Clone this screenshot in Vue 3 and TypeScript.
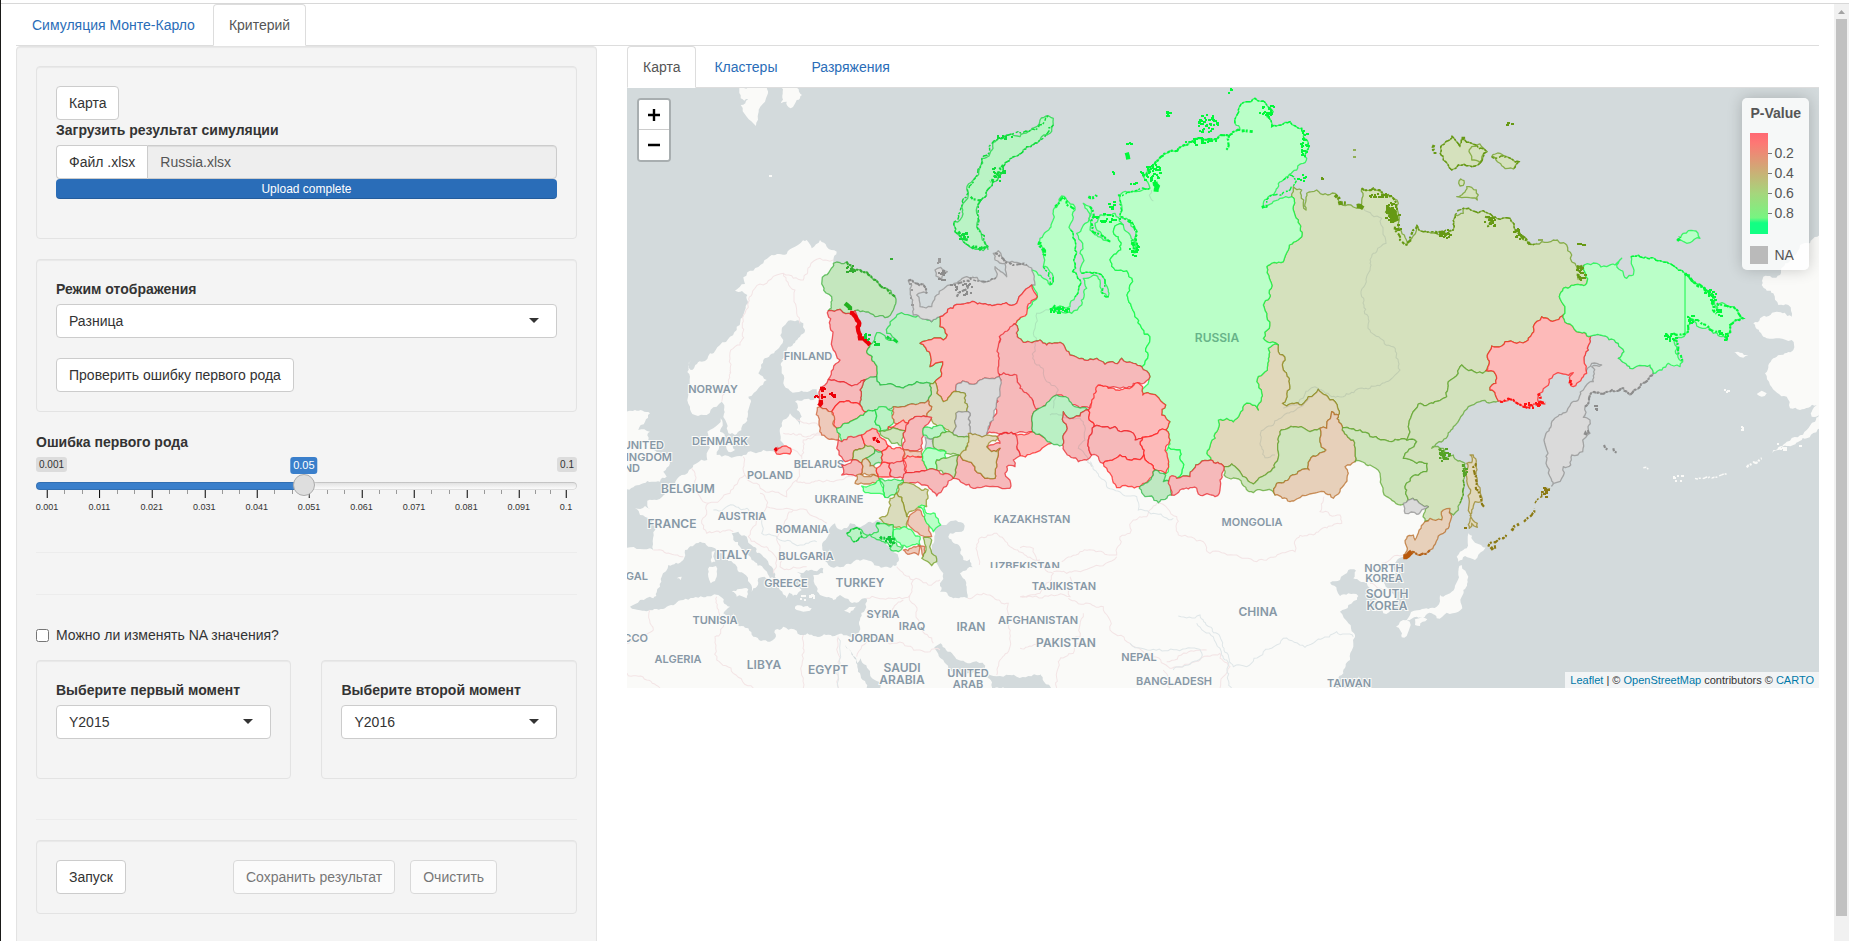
<script setup lang="ts">
import { computed, ref } from 'vue'

const level = ref(0.05)
const allowNa = ref(false)
const mode = ref('Разница')
const first = ref('Y2015')
const second = ref('Y2016')

const LOW = 0.001
const HIGH = 0.1
const share = (v: number) => ((v - LOW) / (HIGH - LOW)) * 100
const levelShare = computed(() => share(level.value))

const majors = [0.001, 0.011, 0.021, 0.031, 0.041, 0.051, 0.061, 0.071, 0.081, 0.091, 0.1]
const minors = majors.slice(0, -1).flatMap((v, i) => {
  const step = (majors[i + 1] - v) / 3
  return [v + step, v + 2 * step]
})

/* Outlines are stored per tile, three units to a pixel. */
type Tile = 'A' | 'B' | 'C' | 'D' | 'E' | 'F'
const origin: Record<Tile, [number, number]> = {
  A: [620, 40], B: [1000, 80], C: [1400, 0], D: [620, 360], E: [1020, 360], F: [1400, 330],
}
type Pt = [number, number]

function parse(source: string): Pt[] {
  let base: Pt = [0, 0]
  const out: Pt[] = []
  for (const token of source.trim().split(/\s+/)) {
    if (token in origin) {
      const o = origin[token as Tile]
      base = [o[0] * 3, o[1] * 3]
    } else {
      const [x, y] = token.split(',').map(Number)
      out.push([base[0] + x, base[1] + y])
    }
  }
  return out
}

function noise(a: number, b: number, c = 0): number {
  const s = Math.sin(a * 12.9898 + b * 78.233 + c * 37.719) * 43758.5453
  return s - Math.floor(s)
}

function split(a: Pt, b: Pt, out: Pt[]): void {
  const len = Math.hypot(b[0] - a[0], b[1] - a[1])
  if (len < 11) {
    out.push(b)
    return
  }
  const flip = a[0] > b[0] || (a[0] === b[0] && a[1] > b[1])
  const [p, q] = flip ? [b, a] : [a, b]
  const k = (noise(p[0] + q[0], p[1] + q[1]) - 0.5) * Math.min(len * 0.45, 13)
  const m: Pt = [
    Math.round((p[0] + q[0]) / 2 - ((q[1] - p[1]) / len) * k),
    Math.round((p[1] + q[1]) / 2 + ((q[0] - p[0]) / len) * k),
  ]
  split(a, m, out)
  split(m, b, out)
}

function line(source: string, close = true): string {
  const pts = parse(source)
  const out: Pt[] = [pts[0]]
  for (let i = 1; i < pts.length; i++) split(pts[i - 1], pts[i], out)
  if (close) split(pts[pts.length - 1], pts[0], out)
  return 'M' + out.map(([x, y]) => `${(x / 3).toFixed(1)} ${(y / 3).toFixed(1)}`).join('L') + (close ? 'Z' : '')
}

const land = [
  'A 212,990 245,965 270,940 300,915 330,890 350,860 370,830 385,790 382,765 345,752 375,732 370,712 400,692 430,670 455,645 500,642 525,620 560,600 575,625 600,600 620,620 650,635 640,660 640,670 650,780 680,860 700,950 900,960 1100,860 1200,850 B 200,780 300,700 450,500 700,400 830,500 1000,450 1200,560 C 50,800 300,850 480,880 520,980 F 540,60 400,40 300,100 230,170 100,260 30,350 60,450 150,520 140,560 130,600 80,650 40,665 10,680 E 1150,590 1115,615 1128,640 1090,665 1110,690 1130,720 1120,745 1090,760 1072,740 1065,710 1050,685 1040,668 1000,655 1008,632 985,630 960,660 930,668 950,690 960,708 985,700 1015,708 985,735 960,755 985,790 1002,820 1000,860 990,900 970,940 940,984 940,1010 D 0,1010 0,720 0,565 21,563 100,570 105,500 90,480 60,465 45,445 75,438 92,448 82,422 110,420 140,400 165,375 185,345 215,325 230,310 262,300 260,280 270,262 258,250 262,215 280,205 302,175 308,190 300,215 315,225 310,240 295,250 290,285 305,290 345,290 370,285 430,270 470,278 490,260 480,220 485,190 510,160 530,180 540,195 545,170 530,150 525,125 580,120 600,110 590,88 545,92 510,92 490,70 485,40 490,0 A 485,960 505,920 540,890 555,870 550,850 500,848 485,870 490,900 470,930 430,960 420,990 D 415,40 440,60 415,85 385,110 385,150 375,190 345,225 325,220 320,190 312,150 305,125 290,140 260,165 225,165 210,140 205,100 215,80 210,50 205,20 215,0',
  'D 15,155 45,150 90,160 75,185 55,210 90,215 85,240 100,262 118,285 125,300 155,288 150,310 130,335 140,350 120,365 70,370 21,388 10,380',
  'A 358,143 362,175 385,178 362,195 380,230 408,258 415,220 435,185 440,143',
  'A 485,143 482,190 500,185 512,205 530,180 546,165 530,143',
  'F 205,610 218,630 235,642 265,650 250,662 225,690 195,678 175,695 170,680 180,665 200,655 203,620',
  'F 185,705 205,740 190,780 185,800 187,835 175,845 140,848 110,865 95,850 50,860 20,870 30,855 60,840 110,830 120,795 130,800 155,785 175,735 176,715',
  'F 45,868 70,862 82,868 60,888 45,885',
  'F 0,875 20,870 32,885 20,918 5,922 0,900 -12,890',
  'C 1275,690 1230,730 1200,735 1150,800 1140,825 1090,830 1085,855 1120,880 1135,915 1165,915 1175,950 1130,935 1080,955 1060,970 1090,1010 F 1100,25 1175,30 1180,60 1140,75 1120,85 1095,130 1110,165 1160,200 1170,235 1200,240 1250,225 1235,260 1280,240',
  'F 1275,285 1220,325 1180,345 1115,370 1120,360 1160,335 1220,300 1245,275 1275,240',
  'F 1070,192 1085,182 1100,190 1085,200', 'F 995,65 1020,68 1045,75 1030,83',
  'D 325,240 340,245 345,270 325,275 318,258',
]

const water = [
  'D 30,740 60,720 100,715 120,680 125,650 145,615 190,600 195,570 240,545 265,560 285,565 315,590 340,610 370,640 390,670 395,695 410,680 415,655 450,655 435,630 395,600 370,580 360,560 340,540 335,520 355,515 380,530 400,560 430,590 455,620 465,650 490,680 510,700 530,705 545,690 520,670 545,655 530,635 570,630 610,625 610,640 580,645 590,680 600,705 640,720 660,705 690,725 740,715 735,750 720,800 710,830 690,830 650,825 600,830 550,825 490,800 465,810 465,835 450,845 400,830 385,805 345,790 330,770 310,760 330,740 310,725 295,705 250,712 190,720 140,740 90,750 45,748',
  'D 645,490 625,515 610,545 610,590 625,615 660,622 700,605 740,600 790,622 830,615 835,590 815,570 790,545 780,510 785,480 740,490 715,500 690,490 665,510',
  'D 940,510 970,495 1000,482 1030,490 1025,515 990,520 985,530 1000,548 1020,560 1030,600 1045,610 1040,630 1020,640 1040,680 1043,715 1000,715 960,695 960,670 970,640 950,610 935,560',
  'D 675,855 700,890 720,940 742,990 785,990 750,940 722,895 712,910 695,885',
  'D 943,862 962,850 1000,885 1050,910 1088,908 1110,945 1190,950 1260,945 E 60,942 72,965 95,990 D 1115,990 1112,960 1090,922 1070,935 1040,940 1010,950 985,925 970,900',
  'D 1030,602 1050,598 1058,622 1040,628',
]

const isles = [
  'D 268,620 288,618 290,650 272,670 265,650', 'D 275,575 285,572 286,605 275,608',
  'D 335,695 385,688 380,715 350,710', 'D 525,740 575,745 570,752 530,750', 'D 672,752 708,740 690,760',
  'D 445,655 490,655 520,690 500,715 480,690', 'D 170,655 185,650 182,660',
]

const borders = [
  'A 640,660 600,655 570,680 550,720 520,715 490,700 470,705 405,745 375,820 360,915 332,930 330,1000',
  'A 490,700 525,750 530,820 540,850', 'D 305,125 325,60 330,30',
  'D 530,180 590,190 610,225 520,220 490,220', 'D 605,225 550,240 545,290 512,270',
  'D 545,290 530,365 620,360 700,350', 'D 370,290 375,345 430,390 500,410 530,360',
  'D 215,325 225,370 240,410 265,430 245,490 260,520 340,515', 'D 265,430 330,400 375,345',
  'D 420,400 440,440 520,450 560,450 620,490', 'D 440,440 400,500 385,530 440,560 470,600 460,640',
  'D 520,450 470,540 480,620 560,620', 'D 100,570 190,590', 'D 290,710 310,800 285,830 290,900 340,940 400,984',
  'D 550,825 550,984', 'D 655,830 655,984', 'D 90,750 100,810 21,850', 'D 21,940 120,984',
  'D 740,715 870,705 880,660 830,620', 'D 870,705 900,800 940,850', 'D 740,750 780,770 850,720',
  'D 710,890 750,830 830,850 900,870 960,870', 'D 880,660 940,670 960,660', 'D 1043,715 1090,700 1165,730 1170,860 1140,900 1130,945',
  'D 1078,615 1078,535 1130,520 1170,560 1260,600', 'E 0,563 40,565 50,600 100,640 60,700 0,710',
  'E 125,605 180,575 290,585 300,530 330,520 340,480 380,470 410,430 470,470 475,525 550,545 570,580 640,585 710,605 825,575 830,535 880,525 965,490 960,465 900,455 912,410',
  'E 290,590 220,620 140,640 100,635', 'E 150,650 150,710 0,710', 'E 145,715 250,740 270,810 330,850 400,890 450,925 540,900 600,880 630,920 600,984',
  'E 190,760 180,830 0,865', 'E 110,984 115,905 160,880 190,830', 'E 1050,670 1100,690', 'E 1085,610 1150,585',
  'E 430,930 450,984', 'E 560,870 500,880 440,905',
]
const rivers = [
  'E 210,305 260,380 350,410 355,450 460,475', 'E 475,768 540,765 600,830 640,920 680,920 730,875 790,835 855,862 950,815 1000,830',
  'E 530,790 580,830 620,900 635,984', 'D 280,450 340,435 420,460 425,520 480,540 540,555 590,545',
  'E 330,850 400,868 540,868 545,890 460,930', 'D 655,835 655,984',
]
const innerRivers = [
  'B 460,363 448,345 455,330', 'B 148,690 110,700 100,760 105,790 98,835 130,880 175,930 160,985',
  'B 1090,385 1145,415 1158,490 1130,515 1100,590 1085,650 1110,750 1190,820 1200,870 1170,900 1080,925 995,950 945,920 890,975 850,985',
  'E 870,110 820,155 735,205 720,250 735,293 765,285', 'E 90,165 190,185 195,240 175,265 215,320',
]

const G = ['#baffc8', '#00f83a']
const G2 = ['#baf3c5', '#0cd636']
const G3 = ['#bfe8c2', '#22b53c']
const M = ['#c4e7be', '#32ac30']
const L = ['#cfe5bd', '#56a326']
const Y = ['#d5e1bd', '#669914']
const O = ['#dadcbc', '#858c14']
const T = ['#e1d8bb', '#94801a']
const B = ['#e7d0ba', '#b5651d']
const S = ['#eecabb', '#cb5628']
const R = ['#fdbab9', '#ff1414']
const R2 = ['#f6b9ba', '#ea1c24']
const N = ['#dadada', '#8c8c8c']

const regions: [string[], string][] = [
  [G2, 'A 1285,227 1300,235 1300,255 1290,280 1260,300 1220,320 1180,350 1150,385 1120,425 1100,465 1080,485 1070,520 1070,560 1085,590 1105,620 1090,632 1060,625 1030,605 1005,575 1003,545 1020,540 1025,500 1045,465 1040,448 1060,420 1080,380 1085,355 1110,340 1130,300 1165,285 1200,290 1225,275 1250,260 1260,240'],
  [Y, 'B 875,350 880,320 905,330 918,390 920,340 950,330 1005,340 1020,370 1085,385 1085,325 1120,325 1165,345 1195,370 1195,440 1222,495 C 50,675 70,695 130,700 160,690 165,645 190,640 190,625 250,632 290,655 330,655 345,690 390,733 460,720 500,735 515,765 515,785 530,800 553,795 560,850 540,855 490,865 478,890 495,920 490,945 470,960 425,950 400,980 385,1015 F 385,30 350,40 315,35 305,48 275,48 262,75 268,100 248,130 215,120 185,105 175,130 145,155 140,200 100,220 55,222 35,255 25,290 20,330 E 1115,245 1050,230 1020,210 968,203 955,165 945,125 930,120 895,88 865,110 845,135 800,138 787,130 808,70 790,30 B 855,840 835,815 835,795 790,775 808,745 800,710 790,675 808,655 808,595 800,560 850,545 865,510 905,470 895,420 880,390'],
  [T, 'B 835,795 835,815 855,840 E 790,30 808,70 787,130 800,138 845,135 865,110 895,88 930,120 945,125 955,165 935,155 925,180 920,205 900,205 860,210 825,200 780,215 775,275 765,310 700,372 635,312 612,320 572,300 560,280 572,250 585,235 595,180 620,175 640,185 672,135 690,130 715,150 725,100 710,65 743,15 B 805,805'],
  [L, 'E 780,215 825,200 860,210 900,205 900,245 918,270 870,300 868,330 770,370 765,405 740,390 700,398 665,370 612,345 612,320 635,312 700,372 765,310 775,275'],
  [B, 'E 935,155 955,165 968,203 1000,240 1005,305 975,320 985,340 960,395 940,415 890,398 810,425 765,405 770,370 868,330 870,300 918,270 900,245 900,205 920,205 925,180'],
  [L, 'E 968,203 1020,210 1050,230 1115,245 1160,240 1190,245 1150,295 1190,310 1222,310 1220,335 1185,345 1155,380 1165,420 1150,433 1100,410 1080,340 1050,315 1005,305 1000,240'],
  [['#d2e2bc', '#56a326'], 'F 248,130 258,122 285,130 288,160 270,180 295,213 240,215 205,230 160,290 95,355 130,355 125,385 160,375 195,400 190,450 180,520 160,555 140,540 125,570 75,575 75,545 85,530 50,510 25,510 15,470 45,435 80,425 82,400 50,400 10,385 50,335 20,330 25,290 35,255 55,222 100,220 140,200 145,155 175,130 185,105 215,120'],
  [N, 'F 25,510 50,510 85,530 50,553 15,550 10,520'],
  [B, 'F 75,575 90,565 125,570 130,540 150,535 155,560 130,610 90,660 60,675 35,665 12,682 22,655 20,625 40,615 45,630'],
  [T, 'F 200,400 215,398 210,375 220,375 228,400 232,450 245,515 225,515 215,540 218,570 232,580 232,592 215,580 208,595 210,550 212,480'],
  [N, 'F 572,18 600,15 655,40 672,65 655,85 690,115 750,105 760,130 720,170 690,195 670,175 625,185 570,195 555,230 550,262 570,270 570,310 548,330 548,365 515,375 512,405 490,410 485,445 455,468 440,390 438,310 460,270 500,245 550,180 580,155 575,110 605,105 575,100 555,130 552,90 565,60'],
  [R, 'C 385,1015 400,980 425,950 470,960 490,945 500,970 530,995 F 572,18 565,60 552,90 560,130 520,170 510,150 520,128 460,135 420,190 415,215 435,222 370,230 340,210 295,213 270,180 288,160 285,130 258,122 268,100 262,75 275,48 305,48 315,35 350,40 385,30'],
  [G, 'C 553,795 590,790 620,800 645,795 665,775 650,795 680,835 700,825 693,770 780,782 855,820 940,890 950,930 960,910 1000,920 1028,955 990,975 980,1015 940,1000 925,980 890,978 870,955 858,1000 825,1015 F 830,50 848,95 840,110 805,100 760,130 750,105 690,115 655,85 672,65 655,40 600,15 572,18 C 530,995 500,970 490,945 495,920 478,890 490,865 540,855 560,850'],
  [G, 'B 90,572 130,595 150,615 160,590 130,560 130,520 118,490 130,465 155,430 160,390 175,370 185,348 205,365 225,390 212,450 225,480 218,575 240,600 225,650 210,680 150,688 215,700 245,675 260,625 250,595 280,585 300,600 305,640 325,650 315,610 295,580 245,580 240,520 248,490 230,460 265,425 265,395 250,370 270,380 270,450 310,480 330,485 300,455 285,430 300,405 345,400 370,435 350,435 340,455 355,470 362,510 332,545 345,570 380,572 398,605 385,660 405,710 425,745 450,770 440,800 445,825 425,860 400,850 365,835 345,850 315,853 290,835 210,825 185,790 140,795 120,780 70,787 52,770 55,750 42,732 85,685 112,650 105,630 100,600 88,585'],
  [G, 'B 355,345 365,340 450,325 430,290 460,255 500,220 560,195 600,175 640,180 680,165 720,150 705,130 715,90 740,65 765,55 800,75 820,95 800,110 815,140 870,125 905,145 925,190 920,235 890,270 850,300 790,370 790,382 840,355 875,350 880,390 895,420 905,470 865,510 850,545 800,560 808,595 808,655 790,675 800,710 808,745 790,775 835,795 805,805 E 743,15 710,65 725,100 715,150 690,130 672,135 640,185 620,175 595,180 585,235 572,250 560,280 572,300 540,310 510,350 470,355 490,320 480,270 445,262 450,240 437,210 450,185 425,165 437,135 410,108 368,105 390,50 B 425,860 445,825 440,800 450,770 425,745 405,710 385,660 398,605 380,572 345,570 332,545 362,510 355,470 340,455 350,435 370,435 400,480 408,515 410,450 385,420 360,410 365,375'],
  [G, 'E 445,262 480,270 490,320 470,355 430,365 425,350 445,335 437,290'],
  [Y, 'C 155,408 180,440 190,415 215,430 260,455 240,490 175,495 155,510 130,480 122,440'],
  [Y, 'C 215,440 240,432 262,455 240,490 215,480'],
  [Y, 'C 275,470 300,460 320,470 357,485 340,507 310,500'],
  [Y, 'C 170,590 190,580 200,560 215,562 235,585 232,600'],
  [Y, 'C 176,550 182,537 192,542 190,556 180,558'],
  [G, 'C 832,722 850,700 865,692 880,692 900,715 870,728'],
  [M, 'A 640,670 680,665 700,690 740,695 800,745 828,785 820,810 795,833 765,830 705,812 685,820 660,808 625,812 635,770 610,740 615,705'],
  [R2, 'A 625,812 660,808 685,820 705,812 718,850 720,895 750,915 740,935 765,970 770,1010 730,1020 695,1038 625,1018 660,960 640,930 630,860'],
  [G2, 'A 740,935 750,915 770,878 830,905 800,880 805,860 845,818 880,830 935,845 960,830 960,860 982,885 970,900 900,910 930,940 930,980 968,965 965,1000 945,1025 930,1030 890,1025 860,1038 780,1035 770,1010 765,970'],
  [N, 'A 1120,640 1135,632 1160,665 1220,675 1240,700 1245,735 1235,735 1180,795 1010,793 960,830 935,845 880,825 875,735 865,722 910,732 920,760 890,765 900,800 935,800 945,770 990,735 1040,710 1100,725 1130,710 1125,680 1160,710 1155,670 1125,660'],
  [N, 'A 945,690 962,682 982,695 965,718 948,708'],
  [R, 'A 960,830 1010,793 1180,795 1235,735 1252,770 1182,852 1140,890 1138,1010 1080,1020 1070,1030 1015,1030 1010,1055 970,1085 950,1060 945,1025 965,1000 968,965 930,980 930,940 900,910 970,900 982,885 960,860'],
  [R2, 'B 42,732 55,750 52,770 70,787 120,780 140,795 185,790 210,825 290,835 315,853 345,850 365,835 400,850 425,860 450,890 425,912 400,910 380,925 300,915 290,950 268,985 240,985 175,945 125,985 105,990 90,955 50,925 50,895 0,885 -2,770'],
  [R2, 'E -62,45 -10,45 0,85 35,115 50,150 35,180 38,215 0,215 -20,222 -100,222 -70,150 -75,100'],
  [R, 'D 1140,222 1185,222 1238,215 1295,250 1260,272 1200,287 1190,260'],
  [['#baf0c4', '#22b53c'], 'E 50,150 110,105 145,115 165,140 205,150 180,168 140,170 130,155 130,185 142,205 128,255 95,250 75,235 38,215 35,180'],
  [R2, 'E 130,155 140,170 180,168 205,150 208,180 222,200 205,240 215,285 200,300 175,305 135,275 128,255 142,205 130,185'],
  [R, 'E 235,75 320,85 345,70 368,80 368,105 410,108 437,135 425,165 450,185 437,210 368,232 345,240 340,220 305,215 285,200 222,200 208,180 205,150'],
  [R2, 'E 222,200 285,200 305,215 340,220 345,240 368,232 372,285 330,300 300,285 250,310 228,285 215,285 205,240'],
  [R, 'E 368,232 437,210 450,240 437,260 445,300 437,340 405,330 372,285'],
  [R, 'E 250,310 300,285 330,300 372,285 405,330 400,345 360,380 325,380 290,383 270,340'],
  [G3, 'E 405,330 437,345 430,365 450,365 455,405 415,428 395,408 375,410 358,385 400,345'],
  [R2, 'E 450,350 470,355 510,350 540,310 572,300 612,320 600,360 598,400 585,410 535,402 530,385 480,390 455,405 445,370'],
  [R2, 'D 1130,230 1140,222 1185,222 1190,260 1200,287 1180,300 1185,320 1160,320 1155,340 1172,370 1170,385 1110,380 1060,385 1000,355 1015,285 1020,285 1065,330 1095,355 1125,355 1130,300 1140,265 1115,275 1100,260 1140,250'],
  [N, 'D 1015,70 1070,70 1080,60 1138,50 1130,125 1120,180 1105,200 1100,225 1045,220 1050,200 1045,155 1040,155 1035,100 1010,95'],
  [O, 'D 930,70 945,65 950,100 970,125 1010,95 1035,100 1040,155 1008,160 998,220 940,190 920,170 935,140 925,120'],
  [N, 'D 1008,160 1045,155 1050,200 1045,230 998,220'],
  [G3, 'D 735,60 770,50 780,75 860,78 890,65 930,70 925,120 820,140 790,145 765,150 740,155 720,135 720,90'],
  [R2, 'D 625,58 695,78 735,60 720,90 720,135 665,125 635,155 600,140 600,90'],
  [R, 'D 635,155 665,125 720,135 740,155 690,185 650,205'],
  [S, 'D 592,143 600,140 635,155 640,185 650,205 655,240 605,225'],
  [G2, 'D 740,155 765,150 765,185 780,215 745,218 720,240 665,245 650,205 690,185'],
  [G2, 'D 765,150 790,140 820,150 822,185 800,210 780,215 765,185'],
  [S, 'D 820,140 925,120 935,140 920,170 885,170 865,190 822,185'],
  [R, 'D 805,200 850,180 865,190 860,215 805,210'],
  [L, 'D 780,215 805,210 860,215 850,220 845,258 815,250 790,230'],
  [R2, 'D 865,190 885,170 935,172 910,205 905,265 850,268 850,220'],
  [G2, 'D 910,205 960,195 980,215 940,235 910,225'],
  [N, 'D 915,230 940,235 940,270 915,265'],
  [L, 'D 940,235 980,215 998,220 1045,230 1035,285 978,280 945,265'],
  [T, 'D 1045,220 1100,225 1135,235 1100,260 1115,275 1140,265 1130,300 1125,355 1095,355 1065,330 1020,285 1038,270'],
  [R2, 'D 655,240 665,245 725,225 735,255 700,280 697,300 670,300 650,265'],
  [R, 'D 725,225 770,208 785,235 805,258 785,275 735,255'],
  [Y, 'D 700,280 735,255 765,270 737,295 725,310 697,300'],
  [G3, 'D 765,270 785,275 785,310 750,318 737,295'],
  [R, 'D 785,275 805,258 850,268 850,302 785,310'],
  [R2, 'D 665,315 697,300 725,310 720,345 665,345'],
  [B, 'D 725,310 737,295 750,318 770,325 775,350 720,345'],
  [B, 'D 710,345 775,350 778,360 740,372 705,370'],
  [R, 'D 785,310 810,310 815,350 775,350 770,325'],
  [R2, 'D 810,310 850,302 858,338 850,355 815,350'],
  [S, 'D 850,268 908,268 910,290 850,298'],
  [R, 'D 850,298 908,290 922,330 858,338'],
  [G, 'D 915,270 978,275 978,295 950,300 950,330 922,330 908,290'],
  [L, 'D 950,300 978,295 1015,285 1000,355 985,355 950,330'],
  [R2, 'D 858,338 922,330 950,330 1000,355 955,400 950,408 935,390 905,375 850,368'],
  [G2, 'D 778,355 850,360 850,368 825,405 795,412 790,385'],
  [G, 'D 725,378 778,360 790,385 795,412 760,400 730,392'],
  [O, 'D 835,375 850,368 925,390 920,440 885,450 860,470 850,430 830,400'],
  [O, 'D 810,415 830,400 850,430 860,470 870,470 860,500 800,492 778,475 805,455'],
  [S, 'D 870,465 900,450 930,490 935,530 900,525 870,500'],
  [G, 'D 895,440 915,438 920,460 945,460 962,495 940,515 920,490 915,465'],
  [G2, 'D 770,490 820,495 825,540 820,565 780,540 750,525 775,515'],
  [G, 'D 820,510 860,503 900,530 900,555 860,562 830,545'],
  [G2, 'D 820,545 850,560 835,575 810,565'],
  [S, 'D 850,570 900,558 895,585 870,582'],
  [S, 'D 895,555 915,560 910,590'],
  [Y, 'D 910,533 935,540 935,580 950,605 935,617 905,595 918,570'],
  [G2, 'D 680,520 710,503 730,520 750,523 725,530 700,545'],
  [R, 'D 465,272 485,260 512,265 510,282 470,282'],
]

const shapes = regions.map(([c, s]) => ({ d: line(s), fill: c[0], stroke: c[1] }))

/* Broken shorelines: thick dashes laid over the outline; the widest run solid. */
const shores: [string, number, string][] = [
  ['#10dc3c', 2, 'A 1300,255 1260,300 1220,320 1180,350 1150,385 1120,425 1100,465 1080,485 1070,560 1105,620 1060,625 1030,605 1005,575 1003,545 1025,500 1060,420 1085,355 1130,300 1165,285 1225,275 1285,227'],
  ['#10dc3c', 4, 'A 1150,375 1130,405 1110,425'], ['#10dc3c', 4, 'A 1015,575 1045,600'],
  ['#10dc3c', 4, 'A 1055,625 1105,625'], ['#10dc3c', 3, 'A 1052,470 1085,480'],
  ['#00f83a', 3, 'B 430,290 460,255 500,220 560,195 600,175 640,180 680,165 720,150'],
  ['#00f83a', 2, 'B 705,130 715,90 740,65 765,55 800,75 820,95 800,110 815,140 870,125 905,145 925,190 920,235'],
  ['#00f83a', 4, 'B 725,153 758,155'], ['#00f83a', 3, 'B 688,165 685,190 678,210'],
  ['#00f83a', 7, 'B 465,305 468,335'], ['#00f83a', 4, 'B 785,382 805,378'],
  ['#00f83a', 2, 'B 850,300 870,285 890,300 870,330 845,345 820,345 800,368'],
  ['#00f83a', 5, 'B 120,485 130,530'], ['#00f83a', 2, 'B 130,560 145,575 150,615 160,590'],
  ['#00f83a', 5, 'B 150,690 180,685 210,692'], ['#00f83a', 3, 'B 165,380 190,352 205,378 225,390'],
  ['#00f83a', 2, 'B 212,450 225,480 218,575 240,600 225,650'], ['#00f83a', 4, 'B 265,350 290,345'],
  ['#00f83a', 4, 'B 405,520 395,480'], ['#00f83a', 3, 'B 385,420 405,450 400,500'],
  ['#00f83a', 3, 'B 270,380 275,450 330,485'], ['#00f83a', 6, 'B 380,218 385,238'],
  ['#00f83a', 2, 'B 245,580 295,580 315,610 310,645 328,650'],
  ['#00f83a', 2, 'B 355,345 400,335 450,325'], ['#00f83a', 2, 'B 360,360 362,410 400,440'],
  ['#669914', 3, 'B 1085,325 1120,325 1165,345 1190,370'], ['#669914', 5, 'B 1005,345 1020,370 1040,370'],
  ['#669914', 10, 'B 1160,388 1180,398 1188,425'], ['#669914', 3, 'B 1185,440 1200,470 1222,495 1250,440'],
  ['#669914', 6, 'B 1070,378 1090,385'], ['#669914', 4, 'C 105,695 130,700 145,705'],
  ['#669914', 2, 'C 50,675 70,695 160,690 165,645 190,625 250,632 290,655 330,655 345,690 390,733 410,730'],
  ['#669914', 3, 'C 255,650 275,665 265,685'], ['#669914', 4, 'C 345,690 365,710 390,733'],
  ['#669914', 5, 'C 530,800 550,798'], ['#669914', 4, 'C 545,800 535,840'],
  ['#669914', 2, 'C 155,408 180,440 190,415 215,430 260,455 240,490 175,495 155,510 130,480 122,440 155,408'],
  ['#669914', 2, 'C 275,470 320,470 357,485 340,507'], ['#669914', 5, 'C 190,410 195,420'], ['#669914', 4, 'C 102,435 105,462'],
  ['#00f83a', 2, 'C 693,770 780,782 855,820 940,890'], ['#00f83a', 4, 'C 855,820 900,860 940,890 950,940'],
  ['#00f83a', 3, 'C 950,910 1000,920 1028,955 990,975 980,1015 925,980 870,955 858,1000 800,1005'],
  ['#00f83a', 3, 'F 825,30 835,70 848,95'], ['#00f83a', 4, 'C 832,722 840,710'],
  ['#32ac30', 3, 'A 680,665 700,690 740,695 800,745 825,770'], ['#22b020', 6, 'A 675,790 690,810'],
  ['#eb0008', 6, 'A 690,818 718,850 720,895 750,915'], ['#0cd636', 4, 'A 800,890 835,910'],
  ['#eb0008', 5, 'D 600,85 612,85'], ['#eb0008', 6, 'D 602,120 597,138'],
  ['#8c8c8c', 3, 'A 865,722 910,732 920,760'], ['#8c8c8c', 3, 'A 990,735 1060,710'], ['#8c8c8c', 3, 'A 1010,770 1045,740'],
  ['#8c8c8c', 2, 'A 1060,720 1100,725 1130,710'], ['#8c8c8c', 3, 'A 1125,640 1155,665 1220,675'],
  ['#ff1414', 4, 'F 415,190 420,215 435,220'], ['#ff1414', 3, 'F 300,215 340,210 370,230 400,228'],
  ['#ff1414', 4, 'F 512,150 515,165'], ['#8c8c8c', 3, 'F 555,230 570,195 625,185 670,175 690,195 720,170 760,130'],
  ['#8c8c8c', 5, 'F 555,315 568,305'], ['#8c8c8c', 3, 'F 612,345 625,360'], ['#8c8c8c', 3, 'F 640,355 650,368'],
  ['#8c7a14', 3, 'F 228,400 228,450 245,515 252,530'], ['#8c7a14', 3, 'F 265,650 320,610'],
  ['#8c7a14', 5, 'F 272,658 290,650'], ['#8c7a14', 4, 'F 335,602 357,582'], ['#8c7a14', 3, 'F 372,575 395,555 402,535'],
  ['#8c7a14', 2, 'F 405,520 425,500 440,475 450,478'], ['#b8590c', 7, 'E 1150,590 1175,575'],
  ['#b5651d', 3, 'F 35,665 60,675 90,660'], ['#56a326', 4, 'F 118,355 135,385'], ['#56a326', 4, 'F 190,402 195,440'],
  ['#56a326', 2, 'F 190,450 180,520'], ['#10c83a', 4, 'D 780,530 805,535 815,550'], ['#10c83a', 2, 'D 680,520 710,503 725,530 700,545'],
  ['#10c83a', 3, 'D 770,490 780,490'], ['#eb0008', 5, 'D 465,272 475,265'], ['#eb0008', 5, 'D 758,238 772,240'],
  ['#fafaf8', 2, 'F 885,445 930,440 980,433'], ['#fafaf8', 2, 'F 730,413 745,418'], ['#fafaf8', 3, 'F 1040,412 1085,385'],
]
const shoreLines = shores.map(([stroke, w, s]) => ({ stroke, w: w / 1.4, solid: w > 5, d: line(s, false) }))

/* Island groups: tile, centre, half-size, count, colour. */
const groups: [Tile, number, number, number, number, number, string][] = [
  ['B', 620, 130, 32, 30, 40, '#00f83a'], ['B', 450, 275, 30, 28, 40, '#00f83a'], ['B', 600, 180, 50, 12, 22, '#00f83a'],
  ['B', 800, 90, 26, 18, 22, '#00f83a'], ['B', 508, 98, 12, 10, 7, '#00f83a'], ['B', 385, 188, 12, 3, 3, '#00f83a'],
  ['B', 320, 410, 40, 14, 20, '#00f83a'], ['B', 335, 375, 12, 14, 6, '#00f83a'], ['B', 685, 30, 8, 8, 4, '#00f83a'],
  ['B', 910, 190, 12, 40, 22, '#00f83a'], ['B', 400, 500, 14, 28, 14, '#00f83a'], ['B', 180, 690, 32, 8, 16, '#00f83a'],
  ['B', 900, 290, 16, 12, 6, '#00f83a'], ['B', 338, 276, 4, 4, 3, '#00f83a'], ['B', 400, 308, 12, 3, 3, '#00f83a'],
  ['B', 1172, 395, 22, 30, 40, '#669914'], ['B', 1140, 345, 35, 8, 16, '#669914'], ['B', 963, 292, 2, 4, 2, '#669914'],
  ['B', 1058, 215, 3, 14, 2, '#8fae55'], ['B', 1192, 445, 8, 12, 6, '#669914'],
  ['C', 130, 700, 20, 14, 22, '#669914'], ['C', 265, 665, 20, 18, 12, '#669914'], ['C', 350, 700, 14, 16, 12, '#669914'],
  ['C', 327, 371, 10, 5, 5, '#669914'], ['C', 540, 735, 16, 8, 4, '#669914'], ['C', 420, 715, 8, 4, 3, '#8fae55'],
  ['C', 540, 815, 12, 25, 14, '#669914'], ['C', 925, 885, 25, 20, 16, '#00f83a'], ['C', 970, 1000, 18, 20, 10, '#00f83a'],
  ['C', 870, 955, 12, 12, 8, '#00f83a'], ['C', 955, 935, 8, 14, 7, '#00f83a'], ['F', 808, 18, 24, 14, 14, '#00f83a'],
  ['F', 130, 370, 16, 22, 20, '#56a326'], ['F', 400, 222, 30, 8, 12, '#ff1414'], ['F', 192, 418, 6, 24, 8, '#56a326'],
  ['F', 435, 485, 14, 14, 8, '#8c7a14'], ['F', 583, 232, 10, 8, 5, '#8c8c8c'], ['F', 195, 590, 3, 3, 2, '#8c7a14'],
  ['A', 738, 885, 8, 14, 9, '#0cd636'], ['A', 764, 912, 10, 10, 8, '#0cd636'], ['A', 812, 654, 10, 1, 3, '#32ac30'],
  ['A', 958, 660, 16, 8, 4, '#9a9a9a'], ['A', 1030, 740, 28, 24, 14, '#8c8c8c'], ['A', 868, 775, 6, 50, 5, '#9a9a9a'],
  ['A', 690, 685, 16, 12, 10, '#32ac30'], ['A', 963, 702, 18, 18, 10, '#8c8c8c'], ['A', 1135, 395, 22, 24, 14, '#10dc3c'],
  ['A', 1030, 590, 16, 14, 12, '#10dc3c'], ['A', 1150, 290, 24, 8, 8, '#10dc3c'],
  ['D', 635, 102, 10, 8, 8, '#eb0008'], ['D', 585, 106, 6, 3, 3, '#eb0008'], ['D', 606, 85, 8, 8, 8, '#eb0008'],
  ['D', 605, 106, 8, 5, 4, '#eb0008'], ['D', 770, 238, 6, 6, 4, '#eb0008'], ['D', 806, 540, 14, 16, 14, '#10c83a'],
  ['D', 560, 712, 26, 12, 10, '#fafaf8'], ['A', 448, 405, 2, 3, 2, '#fafaf8'], ['F', 1160, 345, 40, 14, 10, '#fafaf8'],
  ['F', 840, 443, 30, 8, 6, '#fafaf8'], ['F', 978, 180, 8, 4, 3, '#fafaf8'], ['F', 1025, 295, 8, 8, 3, '#fafaf8'],
]
const specks = groups.map(([t, x, y, rx, ry, n, fill]) => {
  let d = ''
  for (let i = 0; i < n; i++) {
    const a = noise(x, y, i) * Math.PI * 2
    const r = Math.sqrt(noise(y, x, i + 50))
    const px = origin[t][0] + (x + Math.cos(a) * r * rx) / 3
    const py = origin[t][1] + (y + Math.sin(a) * r * ry) / 3
    const s = noise(px, py) > 0.6 ? 3 : 2
    d += `M${Math.round(px)} ${Math.round(py)}h${s}v2h-${s}z`
  }
  return { d, fill }
})

const landD = land.map((s) => line(s)).join('')
const waterD = water.map((s) => line(s)).join('')
const islesD = isles.map((s) => line(s)).join('')
const bordersD = borders.map((s) => line(s, false)).join('')
const riversD = rivers.map((s) => line(s, false)).join('')
const innerRiversD = innerRivers.map((s) => line(s, false)).join('')
const antimeridian = 'M1685 273V333'

type Label = [string, number, number, number?, string?]
const labels: Label[] = [
  ['FINLAND', 808, 356], ['NORWAY', 713, 389], ['DENMARK', 720, 441], ['BELARUS', 819, 464], ['POLAND', 770, 475],
  ['UNITED', 664, 445, 11, 'end'], ['KINGDOM', 672, 457, 11, 'end'], ['IRELAND', 640, 468, 11, 'end'],
  ['BELGIUM', 688, 489, 12], ['UKRAINE', 839, 499], ['AUSTRIA', 742, 516], ['FRANCE', 672, 524, 12],
  ['ROMANIA', 802, 529], ['ITALY', 733, 555, 12], ['BULGARIA', 806, 556], ['PORTUGAL', 648, 576, 11, 'end'],
  ['GREECE', 786, 583], ['TURKEY', 860, 583, 12], ['SYRIA', 883, 614], ['TUNISIA', 715, 620], ['IRAQ', 912, 626],
  ['IRAN', 971, 627, 12], ['MOROCCO', 648, 638, 11, 'end'], ['JORDAN', 871, 638], ['ALGERIA', 678, 659],
  ['LIBYA', 764, 665, 12], ['EGYPT', 828, 670, 12], ['SAUDI', 902, 668, 12], ['ARABIA', 902, 680, 12],
  ['UNITED', 968, 673], ['ARAB', 968, 684], ['KAZAKHSTAN', 1032, 519], ['TAJIKISTAN', 1064, 586],
  ['AFGHANISTAN', 1038, 620], ['PAKISTAN', 1066, 643, 12], ['NEPAL', 1139, 657], ['BANGLADESH', 1174, 681],
  ['MONGOLIA', 1252, 522], ['CHINA', 1258, 612, 12], ['NORTH', 1384, 568], ['KOREA', 1384, 578],
  ['SOUTH', 1387, 594, 12], ['KOREA', 1387, 606, 12], ['TAIWAN', 1349, 683],
]
const legendTicks = ['0.2', '0.4', '0.6', '0.8']
</script>

<template>
  <div class="window">
    <main class="page">
      <nav class="tabs">
        <a href="#simulation">Симуляция Монте-Карло</a>
        <a href="#criterion" class="active">Критерий</a>
      </nav>

      <div class="columns">
        <form class="well sidebar" @submit.prevent>
          <section class="well">
            <button type="button" class="btn">Карта</button>
            <label class="title" for="file-name">Загрузить результат симуляции</label>
            <div class="file">
              <button type="button" class="btn pick">Файл .xlsx</button>
              <input id="file-name" type="text" value="Russia.xlsx" readonly />
            </div>
            <div class="progress">Upload complete</div>
          </section>

          <section class="well">
            <label class="title" for="mode">Режим отображения</label>
            <div class="select">
              <select id="mode" v-model="mode"><option>Разница</option></select>
            </div>
            <button type="button" class="btn check">Проверить ошибку первого рода</button>
          </section>

          <div class="range">
            <label class="title" for="level">Ошибка первого рода</label>
            <div class="bounds">
              <span class="bound">0.001</span>
              <span class="bound">0.1</span>
              <div class="bubble-rail"><output class="bubble" for="level" :style="{ left: levelShare + '%' }">{{ level }}</output></div>
            </div>
            <input
              id="level" v-model.number="level" type="range" min="0.001" max="0.1" step="0.001"
              :style="{ '--fill': levelShare + '%' }"
            />
            <div class="scale">
              <i v-for="m in minors" :key="m" :style="{ left: share(m) + '%' }"></i>
              <span v-for="m in majors" :key="m" :style="{ left: share(m) + '%' }">{{ m }}</span>
            </div>
          </div>

          <hr class="after-range" />
          <hr class="before-check" />

          <label class="checkbox"><input v-model="allowNa" type="checkbox" />Можно ли изменять NA значения?</label>

          <div class="pair">
            <section class="well moment">
              <label class="title" for="first">Выберите первый момент</label>
              <div class="select">
                <select id="first" v-model="first"><option>Y2015</option></select>
              </div>
            </section>
            <section class="well moment">
              <label class="title" for="second">Выберите второй момент</label>
              <div class="select">
                <select id="second" v-model="second"><option>Y2016</option></select>
              </div>
            </section>
          </div>

          <hr class="before-run" />

          <section class="well actions">
            <div class="run"><button type="button" class="btn">Запуск</button></div>
            <button type="button" class="btn" disabled>Сохранить результат</button>
            <button type="button" class="btn" disabled>Очистить</button>
          </section>
        </form>

        <section class="content">
          <nav class="tabs">
            <a href="#map" class="active">Карта</a>
            <a href="#clusters">Кластеры</a>
            <a href="#discharges">Разряжения</a>
          </nav>
          <div class="map">
            <svg class="canvas" viewBox="627 88 1192 600" preserveAspectRatio="xMidYMid slice">
              <defs>
                <clipPath id="tile-edge"><rect x="960" y="550" width="140" height="18" /></clipPath>
              </defs>
              <path :d="landD" fill="#fafaf8" />
              <path :d="waterD" fill="#d3dadc" />
              <path :d="islesD" fill="#fafaf8" />
              <path :d="bordersD" class="border" />
              <path :d="riversD" class="river" />
              <g class="names">
                <text
                  v-for="(l, i) in labels" :key="i" :x="l[1]" :y="l[2] + 4"
                  :font-size="l[3] ?? 11" :text-anchor="l[4] ?? 'middle'"
                >{{ l[0] }}</text>
                <text x="1025" y="570" font-size="11" text-anchor="middle" clip-path="url(#tile-edge)">UZBEKISTAN</text>
              </g>
              <path v-for="(s, i) in shapes" :key="i" :d="s.d" :fill="s.fill" :stroke="s.stroke" class="region" />
              <path :d="antimeridian" class="region" stroke="#00f83a" />
              <path :d="innerRiversD" class="inner-river" />
              <path
                v-for="(s, i) in shoreLines" :key="i" :d="s.d" :stroke="s.stroke" :stroke-width="s.w"
                class="shore" :class="{ solid: s.solid }"
              />
              <path v-for="(s, i) in specks" :key="i" :d="s.d" :fill="s.fill" />
              <text class="russia" x="1217" y="342" font-size="12" text-anchor="middle">RUSSIA</text>
            </svg>

            <div class="zoom">
              <button type="button" aria-label="Zoom in">
                <svg viewBox="0 0 12 12"><path d="M6 0v12M0 6h12" /></svg>
              </button>
              <button type="button" aria-label="Zoom out">
                <svg viewBox="0 0 12 12"><path d="M0 6h12" /></svg>
              </button>
            </div>

            <aside class="legend">
              <strong>P-Value</strong>
              <div class="ramp">
                <div class="colors"></div>
                <ul><li v-for="t in legendTicks" :key="t">{{ t }}</li></ul>
              </div>
              <div class="missing"><i></i>NA</div>
            </aside>

            <footer class="credit">
              <a href="#leaflet">Leaflet</a> | © <a href="#osm">OpenStreetMap</a> contributors © <a href="#carto">CARTO</a>
            </footer>
          </div>
        </section>
      </div>
    </main>

    <div class="scrollbar" aria-hidden="true">
      <svg viewBox="0 0 15 15"><path d="M4 10l3.5-4L11 10z" /></svg>
      <div class="thumb"></div>
    </div>
  </div>
</template>

<style>
html, body { overflow: hidden; background: #fff; }
</style>

<style scoped>
* { box-sizing: border-box; }
.window {
  display: flex;
  height: 100vh;
  overflow: hidden;
  padding-top: 3px;
  border-left: 1px solid #1a1a18;
  font: 14px/20px "Liberation Sans", Arial, sans-serif;
  color: #333;
}
.window::before {
  content: "";
  position: absolute;
  top: 3px;
  left: 1px;
  right: 0;
  height: 1px;
  background: #d8d8d8;
}
.page { flex: 1; min-width: 0; padding: 1px 15px 0; }
a { color: #2a6db8; text-decoration: none; }
.tabs { display: flex; gap: 2px; height: 42px; border-bottom: 1px solid #ddd; }
.tabs a {
  height: 42px;
  padding: 10px 15px;
  border: 1px solid transparent;
  border-radius: 4px 4px 0 0;
}
.tabs a.active { color: #555; background: #fff; border-color: #ddd #ddd #fff; }
.columns { display: grid; grid-template-columns: calc((100% + 30px) / 3 - 30px) minmax(0, 1fr); gap: 30px; align-items: start; }
.well {
  padding: 19px;
  margin-bottom: 20px;
  border: 1px solid #e3e3e3;
  border-radius: 4px;
  background: #f4f4f4;
  box-shadow: inset 0 1px 1px rgba(0, 0, 0, .05);
}
.btn {
  display: block;
  height: 34px;
  padding: 0 12px;
  border: 1px solid #ccc;
  border-radius: 4px;
  background: #fff;
  color: #333;
  font: inherit;
  white-space: nowrap;
}
.btn:disabled { opacity: .65; color: #333; }
.title { display: block; margin-bottom: 5px; font-weight: bold; }
.file { display: flex; }
.file .pick { border-radius: 4px 0 0 4px; border-right: 0; }
.file input {
  flex: 1;
  min-width: 0;
  height: 34px;
  padding: 0 12px;
  border: 1px solid #ccc;
  border-radius: 0 4px 4px 0;
  background: #eee;
  color: #555;
  font: inherit;
  box-shadow: inset 0 1px 1px rgba(0, 0, 0, .075);
}
.progress {
  height: 20px;
  margin-bottom: 20px;
  border-radius: 4px;
  background: #2a6db8;
  box-shadow: inset 0 -1px 0 rgba(0, 0, 0, .15);
  color: #fff;
  font-size: 12px;
  text-align: center;
}
.select { position: relative; }
.select::after {
  content: "";
  position: absolute;
  top: 14px;
  right: 18px;
  border: 5px solid transparent;
  border-top-color: #333;
  border-bottom: 0;
  pointer-events: none;
}
.select select {
  display: block;
  width: 100%;
  height: 34px;
  padding: 0 12px;
  border: 1px solid #ccc;
  border-radius: 4px;
  background: #fff;
  color: #333;
  font: inherit;
  appearance: none;
}
.check { margin-top: 20px; }
.bounds { position: relative; display: flex; justify-content: space-between; align-items: flex-start; height: 17px; }
.bound { padding: 0 3px; border-radius: 3px; background: #dcdcdc; font-size: 10px; line-height: 15px; }
.bubble-rail { position: absolute; top: 0; left: 11px; right: 11px; }
.bubble {
  position: absolute;
  padding: 0 3px;
  border-radius: 3px;
  background: #3a7fcb;
  color: #fff;
  font-size: 11px;
  line-height: 17px;
  transform: translateX(-50%);
}
input[type="range"] {
  display: block;
  width: 100%;
  height: 22px;
  margin: 0;
  background: none;
  appearance: none;
}
input[type="range"]::-webkit-slider-runnable-track {
  height: 8px;
  margin-top: 2px;
  border-radius: 8px;
  background: linear-gradient(#3a7fcb, #3a7fcb) 0 0 / var(--fill) 100% no-repeat, linear-gradient(#dedede, #fff);
  box-shadow: inset 0 0 0 1px rgba(0, 0, 0, .12);
}
input[type="range"]::-webkit-slider-thumb {
  width: 22px;
  height: 22px;
  margin-top: -8px;
  border: 1px solid #ababab;
  border-radius: 50%;
  background: #dedede;
  box-shadow: 1px 1px 3px rgba(255, 255, 255, .3);
  appearance: none;
}
.scale { position: relative; height: 18px; margin: -6px 11px 0; z-index: -1; }
.sidebar { position: relative; z-index: 0; }
.scale i { position: absolute; width: 1px; height: 4px; background: #999; }
.scale span { position: absolute; padding-top: 12px; font-size: 9px; line-height: 10px; transform: translateX(-50%); }
.scale span::before { content: ""; position: absolute; top: 0; left: 50%; width: 1px; height: 8px; background: #000; }
hr { height: 1px; margin: 0; border: 0; background: #ececec; }
.after-range { margin-top: 44px; }
.before-check { margin-top: 41px; }
.before-run { margin: 40px 0 20px; }
.checkbox { display: flex; align-items: center; gap: 7px; margin: 30px 0 15px; }
.checkbox input { width: 13px; height: 13px; margin: 0; }
.pair { display: grid; grid-template-columns: 1fr 1fr; gap: 30px; }
.moment { padding-bottom: 39px; margin-bottom: 0; }
.actions { display: flex; gap: 15px; padding-right: 0; }
.run { flex: 0 0 162px; }
.map { position: relative; height: 600px; overflow: hidden; background: #d3dadc; }
.canvas { display: block; width: 100%; height: 100%; }
.border { fill: none; stroke: #f3e4e5; stroke-width: 1; }
.river { fill: none; stroke: #dfe6e8; stroke-width: 1; }
.inner-river { fill: none; stroke: #788; stroke-opacity: .22; stroke-width: 1; }
.region { stroke-width: 1.3; stroke-opacity: .7; stroke-linejoin: round; }
.shore { fill: none; stroke-dasharray: 3 1 2 2 5 1 2 2; }
.shore.solid { stroke-dasharray: none; }
.names text { fill: #8798a6; stroke: #fafaf8; stroke-width: 2px; paint-order: stroke; }
.names text, .russia { font-family: Inter, "Noto Sans", sans-serif; font-weight: 600; }
.russia { fill: #67b389; }
.zoom {
  position: absolute;
  top: 10px;
  left: 10px;
  overflow: hidden;
  border: 2px solid rgba(0, 0, 0, .2);
  border-radius: 4px;
  background: #fff;
  background-clip: padding-box;
}
.zoom button {
  display: grid;
  place-items: center;
  width: 30px;
  height: 30px;
  padding: 0;
  border: 0;
  background: #fff;
}
.zoom button:first-child { border-bottom: 1px solid #ccc; }
.zoom svg { width: 12px; height: 12px; fill: none; stroke: #000; stroke-width: 2.4; }
.legend {
  position: absolute;
  top: 10px;
  right: 10px;
  padding: 6px 8px;
  border-radius: 5px;
  background: rgba(255, 255, 255, .8);
  box-shadow: 0 0 15px rgba(0, 0, 0, .2);
  color: #555;
  line-height: 18px;
}
.legend strong { display: block; margin-bottom: 11px; }
.ramp { display: flex; }
.colors { width: 18px; height: 101px; background: linear-gradient(#ff6873, #fd7874 10%, #c8b276 40%, #a5d67c 60%, #76f581 84%, #12ff83 89%); }
.ramp ul { margin: 10px 0 0; padding: 0; list-style: none; }
.ramp li { display: flex; align-items: center; gap: 2px; height: 20px; }
.ramp li::before { content: ""; width: 4px; height: 1px; background: #777; }
.missing { display: flex; align-items: center; gap: 6px; margin-top: 12px; }
.missing i { width: 18px; height: 18px; background: #bababa; }
.credit {
  position: absolute;
  right: 0;
  bottom: 0;
  padding: 0 5px;
  background: rgba(255, 255, 255, .7);
  font-size: 11px;
  line-height: 16px;
}
.credit a { color: #0078a8; }
.scrollbar { display: flex; flex-direction: column; align-items: center; width: 15px; margin-top: 1px; background: #f1f1f1; }
.scrollbar svg { width: 15px; height: 15px; fill: #a3a3a3; }
.thumb { flex: 1; width: 11px; margin-bottom: 25px; background: #c1c1c1; }
</style>
